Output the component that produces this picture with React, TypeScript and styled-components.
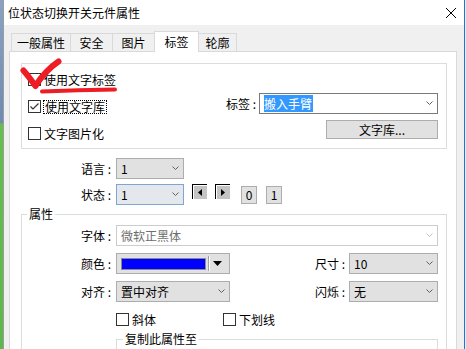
import React from 'react';
import styled, { createGlobalStyle } from 'styled-components';

const GlobalStyle = createGlobalStyle`
  html, body {
    margin: 0;
    padding: 0;
    width: 466px;
    height: 349px;
    overflow: hidden;
  }
  body {
    font-family: "Noto Sans CJK SC", "Noto Sans", sans-serif;
    font-size: 12px;
    color: #000;
    background: #f0f0f0;
  }
`;

const Screen = styled.div`
  position: relative;
  display: flex;
  width: 466px;
  height: 349px;
  overflow: hidden;
`;

const Desktop = styled.div`
  flex: none;
  width: 3px;
  background: linear-gradient(to bottom, #8aa3c4 0, #6b8bb2 123px, #63c04c 124px, #5cb84a 100%);
`;

const Window = styled.div`
  flex: none;
  width: 462px;
  box-sizing: border-box;
  display: flex;
  flex-direction: column;
  border-left: 1px solid #9c9c9c;
  border-right: 1px solid #1c78d2;
  background: #f0f0f0;
`;

const Edge = styled.div`
  flex: none;
  width: 1px;
  background: #e4ebf2;
`;

const TitleBar = styled.div`
  flex: none;
  height: 25px;
  display: flex;
  align-items: center;
  justify-content: space-between;
  padding-left: 4px;
  background: #fff;
  line-height: 14px;
`;

const CloseBtn = styled.div`
  width: 26px;
  height: 25px;
  display: flex;
  align-items: center;
  justify-content: center;
`;

const Body = styled.div`
  flex: 1;
  display: flex;
  flex-direction: column;
  padding-top: 6px;
`;

const TabStrip = styled.div`
  display: flex;
  align-items: flex-end;
  height: 21px;
  margin-left: 7px;
`;

const Tab = styled.div<{ $w: number; $active?: boolean }>`
  box-sizing: border-box;
  width: ${(p) => p.$w}px;
  height: ${(p) => (p.$active ? 21 : 19)}px;
  margin-left: -1px;
  border: 1px solid #d9d9d9;
  border-bottom: none;
  background: ${(p) => (p.$active ? '#fff' : '#f0f0f0')};
  display: flex;
  align-items: center;
  justify-content: center;
  padding-bottom: 1px;
  line-height: 14px;
  position: ${(p) => (p.$active ? 'relative' : 'static')};
  z-index: ${(p) => (p.$active ? 2 : 0)};

  &:first-child {
    margin-left: 0;
  }
`;

const Panel = styled.div`
  flex: 1;
  position: relative;
  z-index: 1;
  margin: -1px 7px 0 5px;
  border: 1px solid #d9d9d9;
  background: #fff;
  padding: 11px 9px 0 11px;
`;

const Group = styled.div`
  box-sizing: border-box;
  height: 86px;
  border: 1px solid #dcdcdc;
  display: flex;
  justify-content: space-between;
`;

const CheckColumn = styled.div`
  display: flex;
  flex-direction: column;
  gap: 14px;
  padding: 9px 0 0 6px;
`;

const CheckRow = styled.label<{ $w?: number }>`
  display: flex;
  align-items: center;
  gap: 3px;
  height: 13px;
  line-height: 14px;
  width: ${(p) => (p.$w ? `${p.$w}px` : 'auto')};
  flex: none;
`;

const Box = styled.span`
  box-sizing: border-box;
  width: 13px;
  height: 13px;
  border: 1px solid #333;
  background: #fff;
  display: flex;
  align-items: center;
  justify-content: center;
  flex: none;
`;

const FocusText = styled.span`
  box-sizing: border-box;
  height: 14px;
  line-height: 12px;
  margin-left: -1px;
  padding: 0 1px;
  border: 1px dotted #000;
`;

const SideColumn = styled.div`
  display: flex;
  flex-direction: column;
  align-items: flex-end;
  gap: 6px;
  padding: 29px 8px 0 0;
`;

const Line = styled.div`
  display: flex;
  align-items: center;
`;

const FieldLabel = styled.span<{ $w?: number }>`
  flex: none;
  width: ${(p) => (p.$w ? `${p.$w}px` : 'auto')};
  text-align: right;
  margin-right: ${(p) => (p.$w ? 5 : 3)}px;
  line-height: 14px;
  white-space: pre;
`;

type ComboKind = 'list' | 'edit' | 'focus' | 'disabled';

const comboBorder: Record<ComboKind, string> = {
  list: '#adadad',
  edit: '#7a7a7a',
  focus: '#7fa6d2',
  disabled: '#cccccc',
};

const comboBg: Record<ComboKind, string> = {
  list: '#e1e1e1',
  edit: '#fff',
  focus: '#e4e8ec',
  disabled: '#fff',
};

const ComboBox = styled.div<{ $w?: number; $kind: ComboKind }>`
  box-sizing: border-box;
  width: ${(p) => (p.$w ? `${p.$w}px` : 'auto')};
  height: 21px;
  display: flex;
  align-items: center;
  padding-left: 4px;
  border: 1px solid ${(p) => comboBorder[p.$kind]};
  background: ${(p) => comboBg[p.$kind]};
  color: ${(p) => (p.$kind === 'disabled' ? '#6d6d6d' : '#000')};
  line-height: 14px;
  flex: none;
`;

const ComboValue = styled.span`
  flex: 1;
  white-space: nowrap;

  mark {
    background: #3399ff;
    color: #fff;
    padding: 0 1px 0 0;
  }
`;

const Chevron = styled.svg`
  flex: none;
  margin-right: 4px;
`;

const PushButton = styled.div<{ $w: number; $h: number }>`
  box-sizing: border-box;
  width: ${(p) => p.$w}px;
  height: ${(p) => p.$h}px;
  border: 1px solid #adadad;
  background: #e1e1e1;
  display: flex;
  align-items: center;
  justify-content: center;
  line-height: 14px;
  flex: none;
`;

const StateBlock = styled.div`
  display: flex;
  flex-direction: column;
  gap: 5px;
  margin-top: 9px;
`;

const StepButton = styled.div`
  box-sizing: border-box;
  width: 15px;
  height: 15px;
  margin-left: 8px;
  align-self: flex-start;
  border-top: 1px solid #000;
  border-left: 1px solid #000;
  box-shadow: inset 1px 1px 0 #fff;
  background: #c4c4c4;
  display: flex;
  align-items: center;
  justify-content: center;
  flex: none;
`;

const ValueButton = styled(PushButton)<{ $gap: number }>`
  margin-left: ${(p) => p.$gap}px;
`;

const FieldSet = styled.fieldset<{ $h?: number }>`
  margin: 0;
  min-width: 0;
  border: 1px solid #dcdcdc;
  padding: 4px 8px 0 0;
  ${(p) => (p.$h ? `height: ${p.$h}px;` : '')}
`;

const AttrSet = styled(FieldSet)`
  margin-top: 2px;
  padding-bottom: 30px;
`;

const Legend = styled.legend<{ $indent: number }>`
  padding: 0 2px;
  margin-left: ${(p) => p.$indent}px;
  line-height: 14px;
  font-size: 12px;
`;

const AttrGrid = styled.div`
  display: grid;
  grid-template-columns: 94px 114px 1fr 89px;
  row-gap: 7px;
  align-items: center;
`;

const GridLabel = styled.span<{ $pad: number }>`
  text-align: right;
  padding-right: ${(p) => p.$pad}px;
  line-height: 14px;
  white-space: pre;
`;

const Wide = styled.div<{ $top?: number }>`
  grid-column: 2 / 5;
  display: flex;
  margin-top: ${(p) => p.$top ?? 0}px;
`;

const ColorPicker = styled.div`
  box-sizing: border-box;
  height: 21px;
  border: 1px solid #adadad;
  background: #e1e1e1;
  display: flex;
  align-items: center;
  padding-left: 4px;
`;

const Swatch = styled.span<{ $color: string }>`
  box-sizing: border-box;
  width: 85px;
  height: 12px;
  border: 1px solid #8a8a8a;
  background: ${(p) => p.$color};
`;

const PickerDivider = styled.span`
  width: 0;
  height: 15px;
  margin-left: 2px;
  border-left: 1px solid #a0a0a0;
  border-right: 1px solid #fff;
`;

const PickerArrow = styled.svg`
  margin-left: 3px;
`;

const Annotation = styled.svg`
  position: absolute;
  left: 0;
  top: 0;
  pointer-events: none;
  z-index: 5;
`;

function Check({ checked }: { checked?: boolean }) {
  return (
    <Box>
      {checked && (
        <svg width="11" height="11" viewBox="0 0 11 11">
          <polyline points="1.5,5.5 4,8 9.5,2.5" fill="none" stroke="#333" strokeWidth="1.2" />
        </svg>
      )}
    </Box>
  );
}

function Drop({ disabled }: { disabled?: boolean }) {
  return (
    <Chevron width="7" height="5" viewBox="0 0 7 5">
      <polyline points="0.5,0.5 3.5,3.5 6.5,0.5" fill="none" stroke={disabled ? '#c2c2c2' : '#606060'} strokeWidth="1" />
    </Chevron>
  );
}

function Combo({ kind, w, children }: { kind: ComboKind; w?: number; children: React.ReactNode }) {
  return (
    <ComboBox $kind={kind} $w={w}>
      <ComboValue>{children}</ComboValue>
      <Drop disabled={kind === 'disabled'} />
    </ComboBox>
  );
}

const tabs = [
  { name: '一般属性', w: 60 },
  { name: '安全', w: 43 },
  { name: '图片', w: 43 },
  { name: '标签', w: 45, active: true },
  { name: '轮廓', w: 39 },
];

export default function App() {
  return (
    <>
      <GlobalStyle />
      <Screen>
        <Desktop />
        <Window>
          <TitleBar>
            <span>位状态切换开关元件属性</span>
            <CloseBtn>
              <svg width="10" height="10" viewBox="0 0 10 10">
                <path d="M0 0 L10 10 M10 0 L0 10" stroke="#000" strokeWidth="1" />
              </svg>
            </CloseBtn>
          </TitleBar>
          <Body>
            <TabStrip>
              {tabs.map((t) => (
                <Tab key={t.name} $w={t.w} $active={t.active}>
                  {t.name}
                </Tab>
              ))}
            </TabStrip>
            <Panel>
              <Group>
                <CheckColumn>
                  <CheckRow>
                    <Check />
                    <span>使用文字标签</span>
                  </CheckRow>
                  <CheckRow>
                    <Check checked />
                    <FocusText>使用文字库</FocusText>
                  </CheckRow>
                  <CheckRow>
                    <Check />
                    <span>文字图片化</span>
                  </CheckRow>
                </CheckColumn>
                <SideColumn>
                  <Line>
                    <FieldLabel>标签 :</FieldLabel>
                    <Combo kind="edit" w={179}>
                      <mark>搬入手臂</mark>
                    </Combo>
                  </Line>
                  <PushButton $w={112} $h={19}>文字库...</PushButton>
                </SideColumn>
              </Group>

              <StateBlock>
                <Line>
                  <FieldLabel $w={90}>语言 :</FieldLabel>
                  <Combo kind="list" w={68}>1</Combo>
                </Line>
                <Line>
                  <FieldLabel $w={90}>状态 :</FieldLabel>
                  <Combo kind="focus" w={68}>1</Combo>
                  <StepButton>
                    <svg width="4" height="7" viewBox="0 0 4 7">
                      <polygon points="4,0 4,7 0,3.5" fill="#000" />
                    </svg>
                  </StepButton>
                  <StepButton>
                    <svg width="4" height="7" viewBox="0 0 4 7">
                      <polygon points="0,0 0,7 4,3.5" fill="#000" />
                    </svg>
                  </StepButton>
                  <ValueButton $w={16} $h={18} $gap={11}>0</ValueButton>
                  <ValueButton $w={16} $h={18} $gap={9}>1</ValueButton>
                </Line>
              </StateBlock>

              <AttrSet>
                <Legend $indent={5}>属性</Legend>
                <AttrGrid>
                  <GridLabel $pad={5}>字体 :</GridLabel>
                  <Wide>
                    <ComboBox $kind="disabled" style={{ flex: 1 }}>
                      <ComboValue>微软正黑体</ComboValue>
                      <Drop disabled />
                    </ComboBox>
                  </Wide>

                  <GridLabel $pad={5}>颜色 :</GridLabel>
                  <ColorPicker>
                    <Swatch $color="#0000ff" />
                    <PickerDivider />
                    <PickerArrow width="9" height="5" viewBox="0 0 9 5">
                      <polygon points="0,0 9,0 4.5,5" fill="#000" />
                    </PickerArrow>
                  </ColorPicker>
                  <GridLabel $pad={4}>尺寸 :</GridLabel>
                  <Combo kind="list">10</Combo>

                  <GridLabel $pad={5}>对齐 :</GridLabel>
                  <Combo kind="list">置中对齐</Combo>
                  <GridLabel $pad={4}>闪烁 :</GridLabel>
                  <Combo kind="list">无</Combo>

                  <Wide $top={4}>
                    <CheckRow $w={107}>
                      <Check />
                      <span>斜体</span>
                    </CheckRow>
                    <CheckRow>
                      <Check />
                      <span>下划线</span>
                    </CheckRow>
                  </Wide>

                  <Wide $top={-1}>
                    <FieldSet $h={40} style={{ flex: 1 }}>
                      <Legend $indent={6}>复制此属性至</Legend>
                    </FieldSet>
                  </Wide>
                </AttrGrid>
              </AttrSet>
            </Panel>
          </Body>
        </Window>
        <Edge />
        <Annotation width="466" height="349" viewBox="0 0 466 349">
          <path
            d="M23.5 70.5 C27.5 75, 31.5 80.5, 35.5 86 C41 77, 49 68, 58.5 61.5"
            fill="none"
            stroke="#ee1d25"
            strokeWidth="6"
            strokeLinecap="round"
            strokeLinejoin="round"
          />
          <path d="M42 91.5 Q78 90.2 115 89.5" fill="none" stroke="#ee1d25" strokeWidth="4" strokeLinecap="round" />
        </Annotation>
      </Screen>
    </>
  );
}
